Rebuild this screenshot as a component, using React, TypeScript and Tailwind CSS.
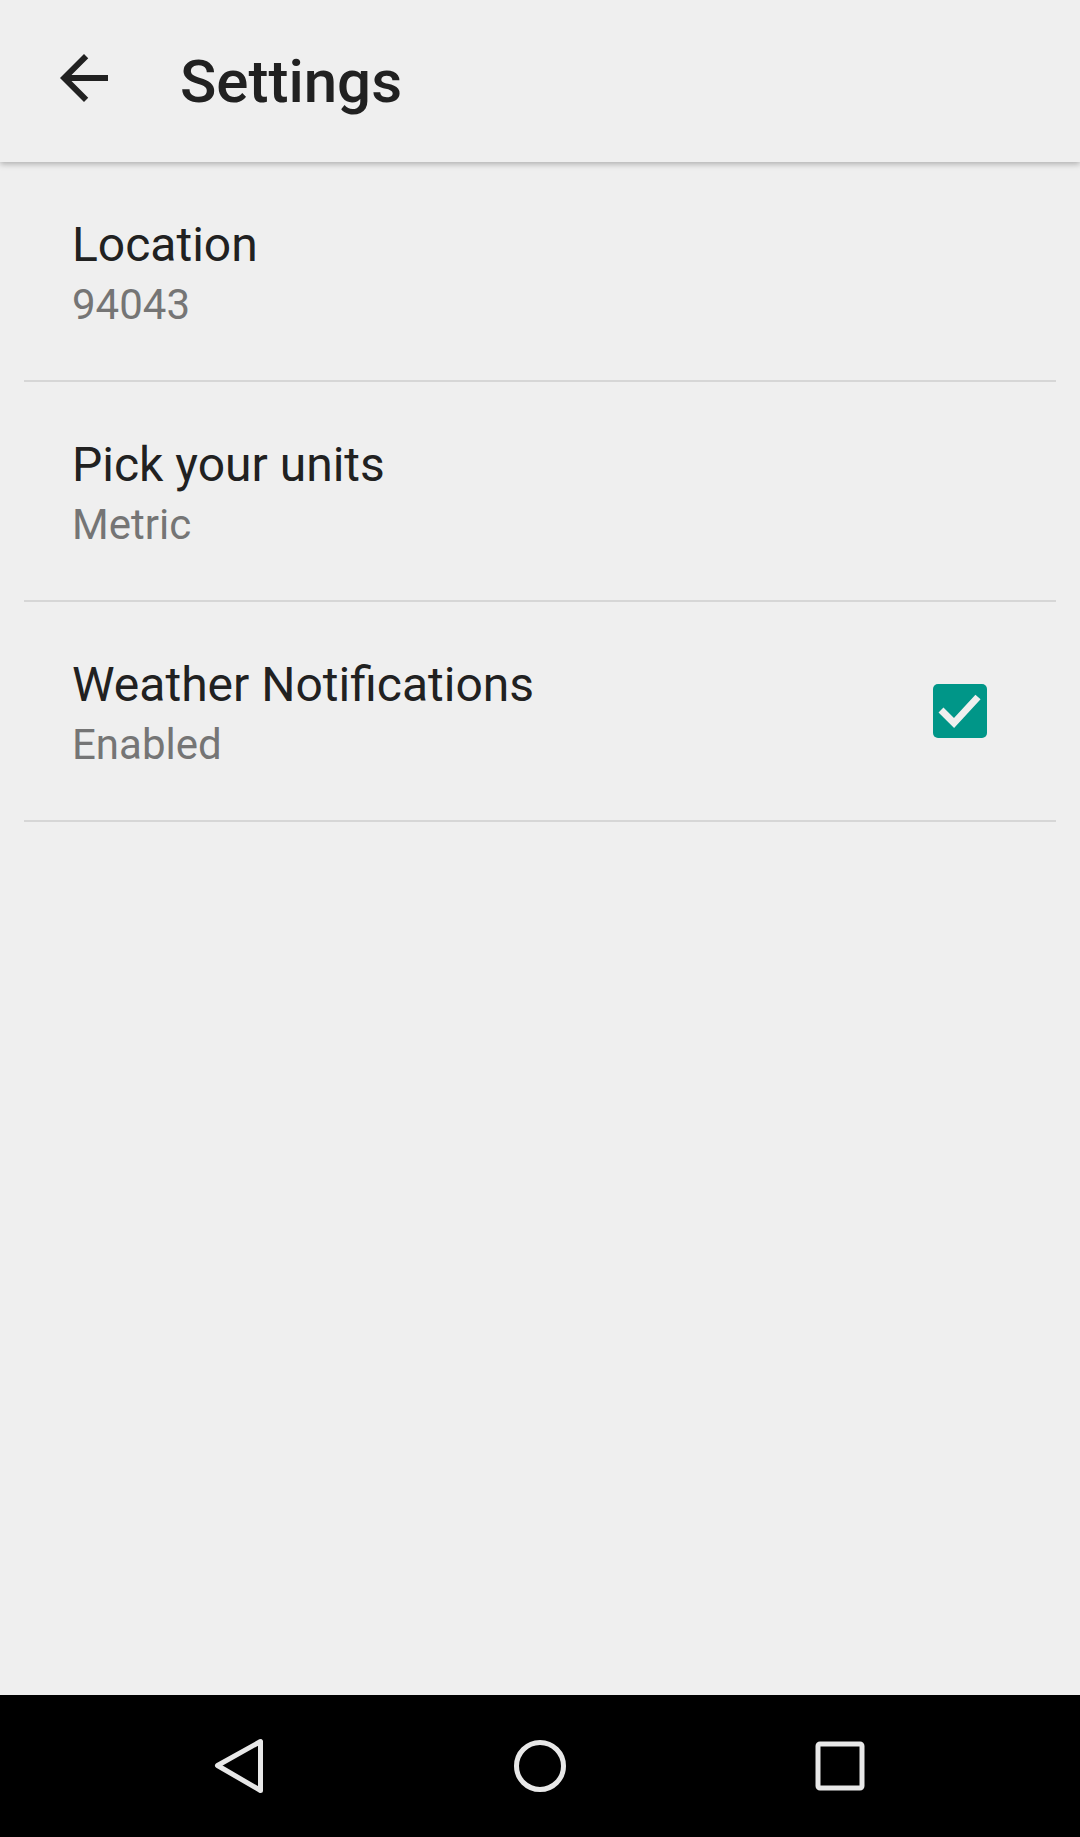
import React from "react";

const rows = [
  { title: "Location", summary: "94043", checked: false },
  { title: "Pick your units", summary: "Metric", checked: false },
  { title: "Weather Notifications", summary: "Enabled", checked: true },
];

const CheckBox: React.FC = () => {
  return (
    <div className="w-[54px] h-[54px] rounded-[5px] bg-[#009688] flex items-center justify-center">
      <svg width="54" height="54" viewBox="0 0 54 54">
        <path d="M8 26 L21 39 L45 13" fill="none" stroke="#efefef" strokeWidth="7" />
      </svg>
    </div>
  );
};

const App: React.FC = () => {
  return (
    <div
      className="w-[1080px] h-[1837px] flex flex-col bg-[#efefef]"
      style={{ fontFamily: "Roboto, 'Noto Sans', sans-serif" }}
    >
      <div className="relative z-10 h-[162px] flex items-start bg-[#efefef] shadow-[0_2px_6px_rgba(0,0,0,0.28)]">
        <svg className="ml-[48px] mt-[42px]" width="72" height="72" viewBox="0 0 24 24">
          <path
            d="M20 11H7.83l5.59-5.59L12 4l-8 8 8 8 1.41-1.41L7.83 13H20v-2z"
            fill="#212121"
          />
        </svg>
        <h1 className="ml-[60px] mt-[46px] text-[60px] leading-[72px] font-medium text-[#212121]">
          Settings
        </h1>
      </div>

      <div className="flex-1 px-[24px]">
        {rows.map((row) => (
          <div
            key={row.title}
            className="h-[220px] flex items-start justify-between border-b-2 border-[#d6d6d6]"
          >
            <div className="pl-[48px] pt-[55px]">
              <div className="text-[48px] leading-[56px] text-[#212121]">{row.title}</div>
              <div className="mt-[8px] text-[42px] leading-[48px] text-[#757575]">
                {row.summary}
              </div>
            </div>
            {row.checked && (
              <div className="mr-[69px] mt-[82px]">
                <CheckBox />
              </div>
            )}
          </div>
        ))}
      </div>

      <div className="h-[142px] bg-black flex items-center">
        <div className="w-1/3 flex justify-end pr-[88px]">
          <svg width="60" height="60" viewBox="0 0 60 60">
            <path
              d="M48.5 5.5 L48.5 54.5 L5.5 29.5 Z"
              fill="none"
              stroke="#e8e8e8"
              strokeWidth="5"
              strokeLinejoin="round"
            />
          </svg>
        </div>
        <div className="w-1/3 flex justify-center">
          <svg width="60" height="60" viewBox="0 0 60 60">
            <circle cx="30" cy="30" r="23.5" fill="none" stroke="#e8e8e8" strokeWidth="5" />
          </svg>
        </div>
        <div className="w-1/3 flex justify-start pl-[94px]">
          <svg width="52" height="52" viewBox="0 0 52 52">
            <rect x="4" y="4" width="44" height="44" rx="2" fill="none" stroke="#e8e8e8" strokeWidth="5" />
          </svg>
        </div>
      </div>
    </div>
  );
};

export default App;
